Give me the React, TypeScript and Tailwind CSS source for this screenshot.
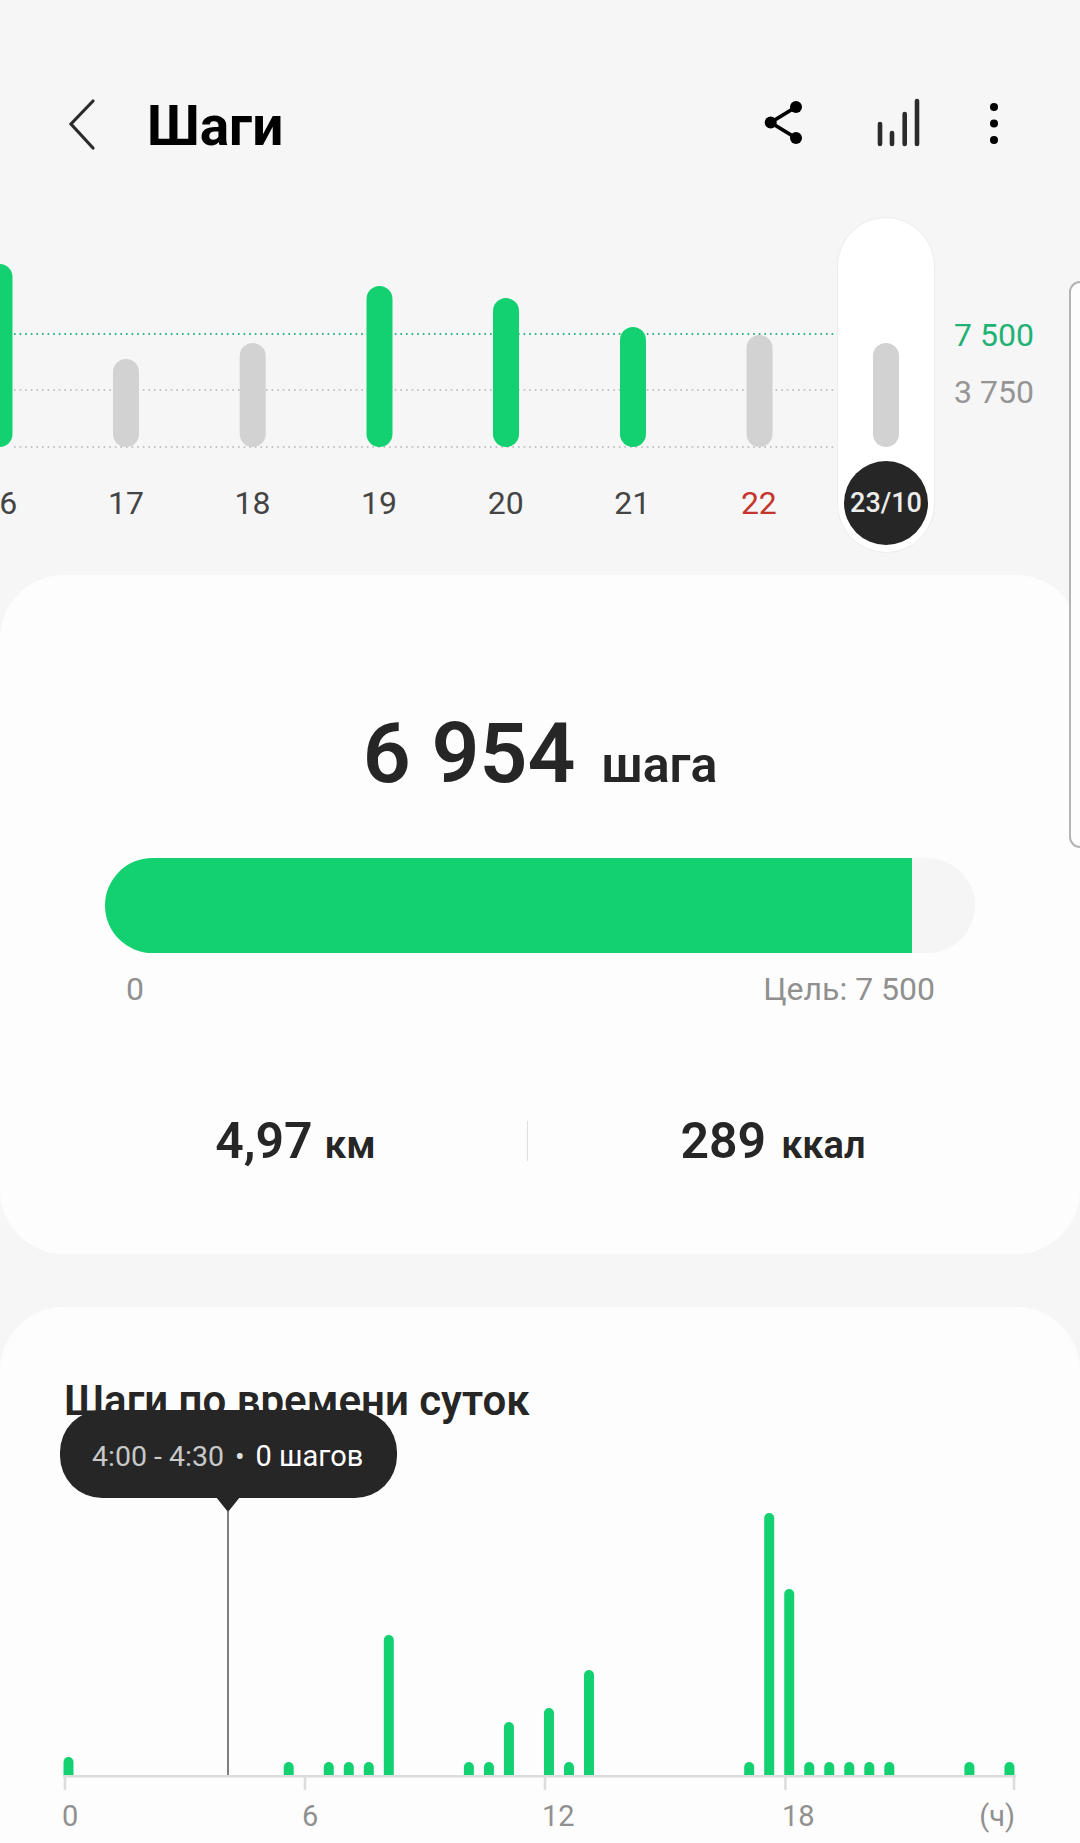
const weekBars = [
  { x: -0.5, top: 264, active: true },
  { x: 126, top: 359, active: false },
  { x: 252.7, top: 343, active: false },
  { x: 379.5, top: 286, active: true },
  { x: 506, top: 298, active: true },
  { x: 633, top: 327, active: true },
  { x: 759.5, top: 335, active: false },
];

const dayLabels = ["16", "17", "18", "19", "20", "21", "22", ""];

// half-hour slot index and top edge (page y) of each bar
const hourBars = [
  [0, 1757], [11, 1762], [13, 1762], [14, 1762], [15, 1762], [16, 1635],
  [20, 1762], [21, 1762], [22, 1722], [24, 1708], [25, 1762], [26, 1670],
  [34, 1762], [35, 1513], [36, 1589], [37, 1762], [38, 1762], [39, 1762],
  [40, 1762], [41, 1762], [45, 1762], [47, 1762],
];

const ticks = [65, 305, 545, 785.5, 1014];

function HeaderIcons() {
  return (
    <div className="ml-auto flex items-center pr-[78px]">
      <svg width="44" height="66" viewBox="0 0 44 66" fill="none">
        <path d="M37 17 L11.7 32.5 L37 48" stroke="#000" strokeWidth="3.8" />
        <circle cx="37" cy="17" r="6" fill="#000" />
        <circle cx="11.7" cy="32.5" r="6" fill="#000" />
        <circle cx="37" cy="48" r="6" fill="#000" />
      </svg>
      <svg className="ml-[73px]" width="46" height="66" viewBox="0 0 46 66" fill="none" stroke="#2b2b2b" strokeWidth="4.6" strokeLinecap="round">
        <path d="M4 34 V54" />
        <path d="M16 43 V54" />
        <path d="M28.7 24 V54" />
        <path d="M41 11 V54" />
      </svg>
      <svg className="ml-[64px]" width="16" height="66" viewBox="0 0 16 66" fill="#000">
        <circle cx="8" cy="17" r="4" />
        <circle cx="8" cy="33.5" r="4" />
        <circle cx="8" cy="50" r="4" />
      </svg>
    </div>
  );
}

function WeekChart() {
  return (
    <section className="relative h-[358px] overflow-hidden">
      <svg className="block" width="1080" height="240" viewBox="0 0 1080 240" fill="none">
        <line x1="14" y1="117" x2="838" y2="117" stroke="#2fb57d" strokeWidth="2" strokeDasharray="1.6 4" />
        <line x1="14" y1="173" x2="838" y2="173" stroke="#c4c4c4" strokeWidth="2" strokeDasharray="1.6 4" />
        <line x1="14" y1="230" x2="838" y2="230" stroke="#c4c4c4" strokeWidth="2" strokeDasharray="1.6 4" />
        {weekBars.map((b) => (
          <rect
            key={b.x}
            x={b.x - 13}
            y={b.top - 217}
            width="26"
            height={447 - b.top}
            rx="13"
            fill={b.active ? "#13d170" : "#d2d2d2"}
          />
        ))}
      </svg>

      <div className="ml-[-64px] mt-[26px] flex">
        {dayLabels.map((d) => (
          <div
            key={d}
            className={`w-[126.6px] shrink-0 text-center text-[32px] leading-[40px] ${d === "22" ? "text-[#c4352d]" : "text-[#444444]"}`}
          >
            {d}
          </div>
        ))}
      </div>

      <div className="absolute left-[837px] top-0 flex h-[336px] w-[98px] flex-col items-center justify-end rounded-full border border-[#ececec] bg-white pb-[7px]">
        <div className="h-[104px] w-[26px] rounded-full bg-[#d2d2d2]" />
        <div className="mt-[14px] flex h-[84px] w-[84px] items-center justify-center rounded-full bg-[#262626] text-[27px] font-medium text-[#ececec]">
          23/10
        </div>
      </div>

      <div className="absolute left-[954px] top-[98px] text-[32px] leading-[40px] text-[#1fb274]">7 500</div>
      <div className="absolute left-[954px] top-[155px] text-[32px] leading-[40px] text-[#959595]">3 750</div>
    </section>
  );
}

function SummaryCard() {
  return (
    <section className="h-[679px] rounded-[64px] bg-[#fdfdfd] pt-[129px]">
      <div className="flex h-[100px] items-baseline justify-center leading-[100px] text-[#262626]">
        <span className="text-[84px] font-semibold">6 954</span>
        <span className="ml-[26px] text-[50px] font-semibold">шага</span>
      </div>

      <div className="mx-[105px] mt-[54px] h-[95px] overflow-hidden rounded-full bg-[#f5f5f5]">
        <div className="h-full w-[807px] bg-[#13d170]" />
      </div>

      <div className="mt-[16px] flex justify-between pl-[126px] pr-[145px] text-[32px] leading-[40px] text-[#909090]">
        <span>0</span>
        <span>Цель: 7 500</span>
      </div>

      <div className="ml-[64px] mr-[62px] mt-[102px] flex h-[60px] items-center text-[#262626]">
        <div className="flex w-[463px] items-baseline justify-center">
          <span className="text-[50px] font-semibold">4,97</span>
          <span className="ml-[12px] text-[39px] font-semibold">км</span>
        </div>
        <div className="h-[40px] w-px bg-[#e0e0e0]" />
        <div className="flex w-[490px] items-baseline justify-center">
          <span className="text-[50px] font-semibold">289</span>
          <span className="ml-[15px] text-[38px] font-semibold">ккал</span>
        </div>
      </div>
    </section>
  );
}

function barPath(x: number, top: number) {
  const y = top - 1490;
  return `M${x - 5} 285 V${y + 5} A5 5 0 0 1 ${x + 5} ${y + 5} V285 Z`;
}

function HourlyCard() {
  return (
    <section className="relative mt-[53px] flex-1 rounded-t-[64px] bg-[#fdfdfd] pt-[69px]">
      <h2 className="pl-[64px] text-[42px] font-semibold leading-[50px] text-[#262626]">Шаги по времени суток</h2>

      <svg className="mt-[64px] block" width="1080" height="300" viewBox="0 0 1080 300" fill="none">
        <path d="M216 7 L240 7 L228 22 Z" fill="#262626" />
        <line x1="228" y1="20" x2="228" y2="285" stroke="#555" strokeWidth="1.5" />
        <rect x="63" y="285" width="953" height="2.5" fill="#dcdcdc" />
        {ticks.map((t) => (
          <rect key={t} x={t - 1.25} y="285" width="2.5" height="15" fill="#dcdcdc" />
        ))}
        {hourBars.map(([slot, top]) => (
          <path key={slot} d={barPath(68.5 + slot * 20.02, top)} fill="#13d170" />
        ))}
      </svg>

      <div className="mt-[8px] flex pl-[62px] pr-[65px] text-[29px] leading-[36px] text-[#909090]">
        <span className="w-[240px]">0</span>
        <span className="w-[240px]">6</span>
        <span className="w-[240px]">12</span>
        <span>18</span>
        <span className="ml-auto">(ч)</span>
      </div>

      <div className="absolute left-[60px] top-[103px] flex h-[88px] w-[337px] items-center rounded-[42px] bg-[#262626] pl-[32px] pt-[6px] text-[28.5px]">
        <span className="text-[#c8c8c8]">4:00 - 4:30</span>
        <span className="ml-[11px] text-[#e0e0e0]">•</span>
        <span className="ml-[11px] text-[29px] text-white">0 шагов</span>
      </div>
    </section>
  );
}

export default function App() {
  return (
    <div className="relative flex h-[1843px] w-[1080px] flex-col overflow-hidden bg-[#f6f6f6] font-['Roboto',sans-serif]">
      <header className="flex h-[217px] items-start pt-[90px]">
        <div className="flex h-[66px] w-full items-center">
          <svg className="ml-[66px]" width="30" height="66" viewBox="0 0 30 66" fill="none">
            <path d="M27 11 L5 34 L27 58" stroke="#2b2b2b" strokeWidth="3.2" strokeLinecap="round" />
          </svg>
          <h1 className="ml-[51px] pt-[6px] text-[55px] font-bold leading-[66px] text-black">Шаги</h1>
          <HeaderIcons />
        </div>
      </header>

      <WeekChart />
      <SummaryCard />
      <HourlyCard />

      {/* edge panel handle */}
      <div className="absolute right-0 top-[281px] h-[567px] w-[11px] rounded-l-[12px] border-y-2 border-l-2 border-[#b4b4b4] bg-[#fdfdfd]" />
    </div>
  );
}
